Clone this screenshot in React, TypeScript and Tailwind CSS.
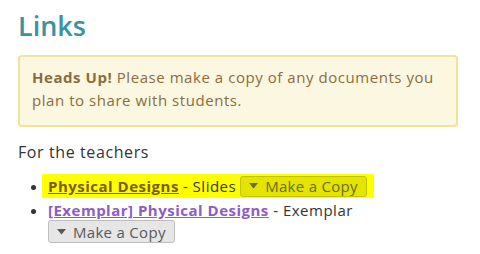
const font = { fontFamily: '"Open Sans", "Liberation Sans", sans-serif' };

function CopyButton({ highlighted }: { highlighted?: boolean }) {
  return (
    <span
      className={
        highlighted
          ? "inline-flex h-[21px] items-center gap-[7px] rounded-[3px] border border-[#c2c200] bg-[#e4e400] px-[8px] text-[15px] tracking-[0.3px] text-[#6b6b1a]"
          : "inline-flex h-[23px] items-center gap-[7px] rounded-[3px] border border-[#bdbdbd] bg-[#e6e6e6] px-[8px] text-[15px] tracking-[0.3px] text-[#595959]"
      }
    >
      <svg width="9" height="6" viewBox="0 0 9 6" className="fill-current">
        <path d="M0 0h9L4.5 5.5z" />
      </svg>
      Make a Copy
    </span>
  );
}

export default function App() {
  return (
    <div className="min-h-[254px] w-[480px] bg-white px-[18px] pt-[8px]" style={font}>
      <h1 className="text-[27px] font-semibold leading-[36px] text-[#3a93a3]">Links</h1>
      <div className="mt-[11px] w-[440px] rounded-[4px] border-2 border-[#f3e39a] bg-[#fbf7e1] px-[12px] pt-[9px] pb-[13px] text-[15px] leading-[23px] tracking-[0.55px] text-[#8b6d3c]">
        <b>Heads Up!</b> Please make a copy of any documents you plan to share with students.
      </div>
      <p className="mt-[13px] text-[16px] leading-[24px] tracking-[0.6px] text-[#333]">For the teachers</p>
      <ul className="mt-[10px] list-disc pl-[30px] text-[15px] leading-[24px] tracking-[0.5px] text-[#333]">
        <li>
          <span className="ml-[-6px] inline-flex h-[24px] items-center gap-[4px] bg-[#ffff00] pl-[6px] pr-[7px]">
            <a className="font-bold text-[#7a5c00] underline">Physical Designs</a>
            <span>- Slides</span>
            <CopyButton highlighted />
          </span>
        </li>
        <li>
          <a className="font-bold text-[#8e5cc4] underline">[Exemplar] Physical Designs</a> - Exemplar
          <div className="mt-[-2px] flex">
            <CopyButton />
          </div>
        </li>
      </ul>
    </div>
  );
}
